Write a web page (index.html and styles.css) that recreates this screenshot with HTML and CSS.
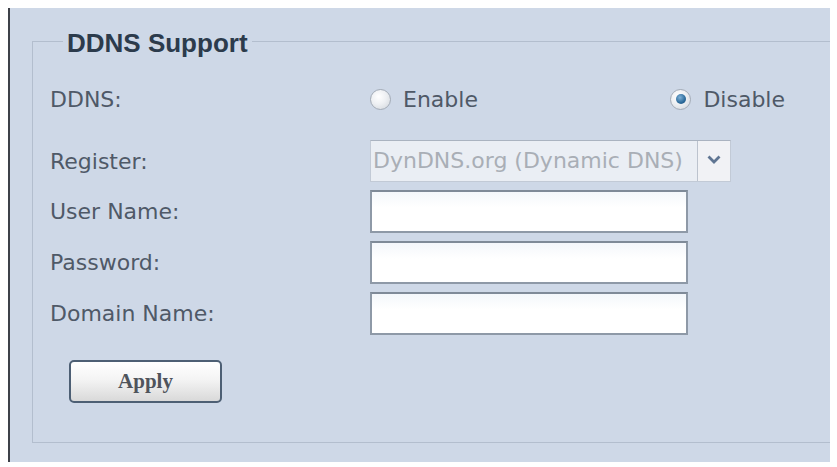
FILE: index.html
```html
<!DOCTYPE html>
<html lang="en">
<head>
    <meta charset="UTF-8">
    <meta name="viewport" content="width=device-width, initial-scale=1.0">
    <title>DDNS</title>
    <link rel="stylesheet" href="styles.css">
</head>
<body>
    <div class="panel">
        <fieldset class="group">
            <legend>DDNS Support</legend>

            <div class="row row-ddns">
                <span class="label">DDNS:</span>
                <div class="radios">
                    <label class="opt"><span class="radio"></span>Enable</label>
                    <label class="opt"><span class="radio checked"></span>Disable</label>
                </div>
            </div>

            <div class="row row-reg">
                <span class="label">Register:</span>
                <div class="select">
                    <span class="select-text">DynDNS.org (Dynamic DNS)</span>
                    <span class="select-btn">
                        <svg width="14" height="9" viewBox="0 0 14 9"><path d="M1.5 1.5 L7 7 L12.5 1.5" fill="none" stroke="#5f7592" stroke-width="2.8"/></svg>
                    </span>
                </div>
            </div>

            <div class="row field">
                <span class="label">User Name:</span>
                <input class="text" type="text">
            </div>
            <div class="row field">
                <span class="label">Password:</span>
                <input class="text" type="password">
            </div>
            <div class="row field">
                <span class="label">Domain Name:</span>
                <input class="text" type="text">
            </div>

            <div class="actions">
                <button class="btn">Apply</button>
            </div>
        </fieldset>
    </div>
</body>
</html>
```

FILE: styles.css
```css
*{
    margin: 0;
    padding: 0;
    box-sizing: border-box;
}
body{
    background: #fff;
    padding: 8px 0 0 8px;
    font-family: "DejaVu Sans", sans-serif;
    font-size: 22px;
    color: #4f5967;
}
.panel{
    width: 822px;
    height: 454px;
    background: #ced8e7;
    border-left: 2px solid #3d4149;
    padding: 16px 0 19px 22px;
}
.group{
    border: 1px solid #b3bece;
    border-right: none;
    padding: 0 0 39px 17px;
}
.group legend{
    margin-left: 13px;
    padding: 4px 4px 0;
    font-family: "Liberation Sans", Arial, sans-serif;
    font-weight: bold;
    font-size: 26px;
    line-height: 30px;
    color: #2c3b4c;
}
.row{
    display: grid;
    grid-template-columns: 320px auto;
    align-items: center;
}
.label{
    white-space: nowrap;
}
.row-ddns{
    margin-top: 21px;
    height: 40px;
}
.radios{
    display: flex;
    justify-content: space-between;
    width: 415px;
}
.opt{
    display: flex;
    align-items: center;
    gap: 12px;
}
.radio{
    width: 21px;
    height: 21px;
    border-radius: 50%;
    border: 1px solid #a3abb6;
    background: radial-gradient(circle at 40% 35%, #fff 0%, #eef0f3 45%, #cfd4db 100%);
    display: flex;
    align-items: center;
    justify-content: center;
}
.radio.checked::after{
    content: '';
    width: 10px;
    height: 10px;
    border-radius: 50%;
    background: radial-gradient(circle at 40% 35%, #7fb2d8 0%, #2c6a9a 60%, #1f4f78 100%);
}
.row-reg{
    margin-top: 21px;
}
.select{
    display: flex;
    width: 361px;
    height: 42px;
    background: #eaeef4;
    border: 1px solid #c2cad6;
    border-top-color: #aab3c0;
}
.select-text{
    flex: 1;
    padding-left: 2px;
    line-height: 40px;
    color: #a9aeb6;
    white-space: nowrap;
    overflow: hidden;
}
.select-btn{
    width: 33px;
    border-left: 1px solid #bcc3ce;
    background: #f1f2f5;
    display: flex;
    justify-content: center;
    padding-top: 14px;
}
.field{
    margin-top: 8px;
}
.text{
    width: 318px;
    height: 43px;
    border: 2px solid #8e99a7;
    border-top-color: #7f8a98;
    background: linear-gradient(#f4f7fb, #fff 40%);
    outline: none;
}
.actions{
    margin-top: 25px;
    padding-left: 19px;
}
.btn{
    width: 153px;
    height: 43px;
    border: 2px solid #4d5f74;
    border-radius: 5px;
    background: linear-gradient(#ffffff, #f4f4f4 45%, #d9d9d9);
    font-family: "Liberation Serif", serif;
    font-weight: bold;
    font-size: 21px;
    color: #4f545c;
}
```
